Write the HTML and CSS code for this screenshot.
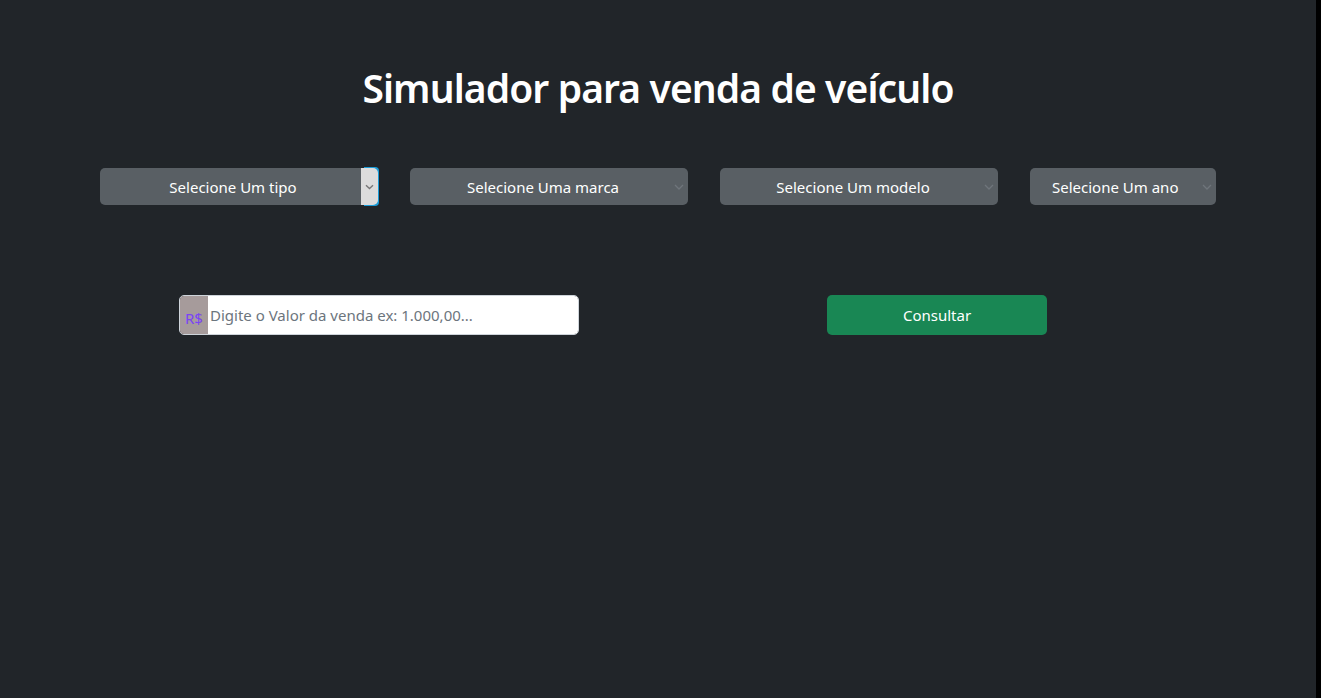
FILE: index.html
```html
<!DOCTYPE html>
<html lang="pt-BR">
<head>
<meta charset="utf-8">
<title>Simulador para venda de veículo</title>
<link rel="stylesheet" href="styles.css">
</head>
<body>
<div class="page">
  <h1 class="title">Simulador para venda de veículo</h1>
  <div class="selects">
    <div class="select sel-tipo">
      <span class="sel-text">Selecione Um tipo</span>
      <span class="sel-btn"><svg width="9" height="6" viewBox="0 0 9 6"><path d="M1 1.2 L4.5 4.5 L8 1.2" fill="none" stroke="#777" stroke-width="1.4"/></svg></span>
    </div>
    <div class="select sel-marca">
      <span class="sel-text">Selecione Uma marca</span>
      <svg class="chev" width="10" height="6" viewBox="0 0 10 6"><path d="M1 1 L5 5 L9 1" fill="none" stroke="#6f757b" stroke-width="1.3"/></svg>
    </div>
    <div class="select sel-modelo">
      <span class="sel-text">Selecione Um modelo</span>
      <svg class="chev" width="10" height="6" viewBox="0 0 10 6"><path d="M1 1 L5 5 L9 1" fill="none" stroke="#6f757b" stroke-width="1.3"/></svg>
    </div>
    <div class="select sel-ano">
      <span class="sel-text">Selecione Um ano</span>
      <svg class="chev" width="10" height="6" viewBox="0 0 10 6"><path d="M1 1 L5 5 L9 1" fill="none" stroke="#6f757b" stroke-width="1.3"/></svg>
    </div>
  </div>
  <div class="actions">
    <div class="input-group">
      <span class="addon">R$</span>
      <input class="value-input" type="text" placeholder="Digite o Valor da venda ex: 1.000,00...">
    </div>
    <button class="btn-consultar" type="button">Consultar</button>
  </div>
</div>
</body>
</html>
```
FILE: styles.css
```css
html { background: #000; }
body {
  margin: 0;
  font-family: "Noto Sans", "Open Sans", sans-serif;
}
.page {
  margin-right: 5px;
  min-height: 698px;
  background: #212529;
  color: #fff;
  padding-top: 64px;
  box-sizing: border-box;
}
.title {
  margin: 0;
  text-align: center;
  font-size: 39px;
  font-weight: 600;
  line-height: 48px;
  letter-spacing: -0.9px;
}
.selects {
  display: flex;
  gap: 32px;
  padding-left: 100px;
  margin-top: 56px;
}
.select {
  position: relative;
  height: 37px;
  background: #595f64;
  border-radius: 5px;
  display: flex;
  align-items: center;
  justify-content: center;
  font-size: 15px;
  box-sizing: border-box;
}
.sel-tipo, .sel-marca, .sel-modelo { width: 278px; }
.sel-ano { width: 186px; justify-content: flex-start; padding-left: 22px; }
.sel-tipo .sel-text,
.sel-marca .sel-text,
.sel-modelo .sel-text { margin-right: 12px; }
.sel-btn {
  position: absolute;
  right: 0;
  top: 0;
  width: 17px;
  height: 37px;
  background: #dcdcdc;
  border-radius: 0 5px 5px 0;
  display: flex;
  align-items: center;
  justify-content: center;
  box-shadow: 2px -2px 0 -1px #1a9bd7, 2px 2px 0 -1px #1a9bd7;
}
.chev {
  position: absolute;
  right: 4px;
  top: 16px;
}
.actions {
  display: flex;
  align-items: center;
  margin-top: 90px;
  padding-left: 179px;
}
.input-group {
  display: flex;
  width: 400px;
  height: 40px;
  border-radius: 5px;
  overflow: hidden;
  border: 1px solid #ced4da;
  box-sizing: border-box;
}
.addon {
  width: 28px;
  background: #a69b9b;
  color: #7a44f5;
  font-size: 15px;
  font-weight: 400;
  display: flex;
  align-items: center;
  justify-content: center;
  padding-top: 5px;
  box-sizing: border-box;
}
.value-input {
  flex: 1;
  border: none;
  outline: none;
  background: #fff;
  font-family: inherit;
  font-size: 15px;
  padding: 0 0 0 2px;
  color: #212529;
}
.value-input::placeholder { color: #6c757d; }
.btn-consultar {
  margin-left: 248px;
  width: 220px;
  height: 40px;
  border: none;
  border-radius: 5px;
  background: #198754;
  color: #fff;
  font-family: inherit;
  font-size: 15px;
}
```
